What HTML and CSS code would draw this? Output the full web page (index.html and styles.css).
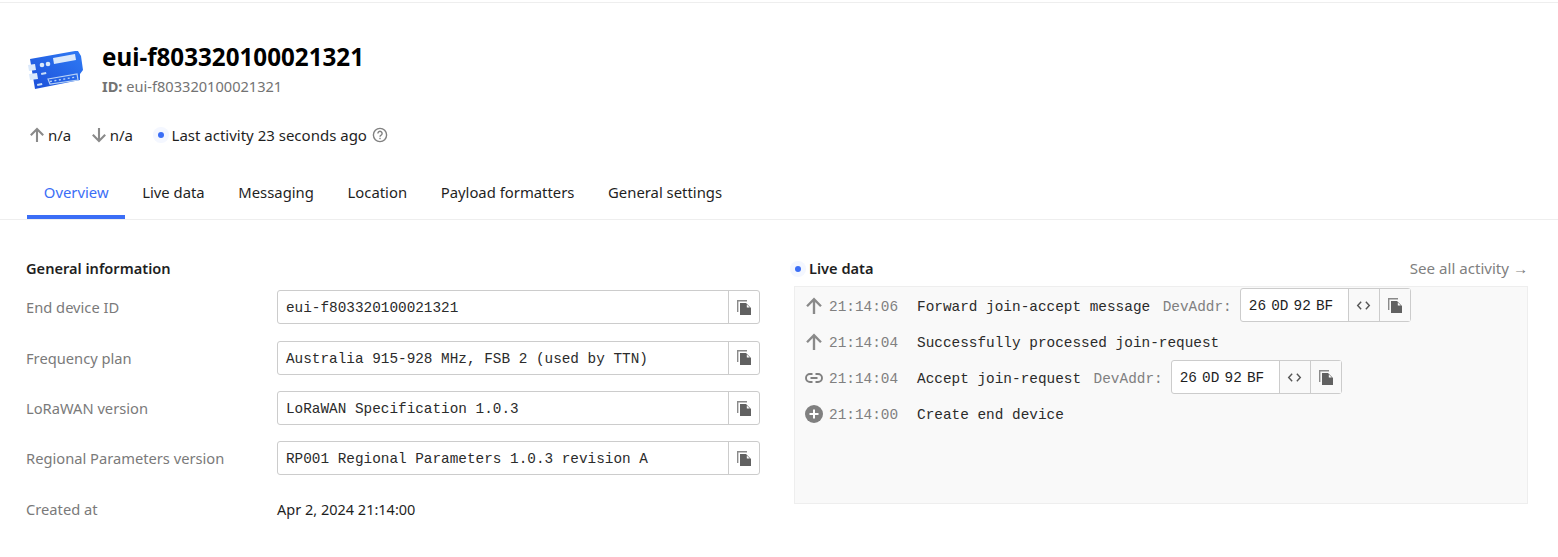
FILE: index.html
```html
<!DOCTYPE html>
<html lang="en">
<head>
  <meta charset="UTF-8">
  <title>eui-f803320100021321</title>
  <link rel="stylesheet" href="styles.css">
</head>
<body>
  <svg class="defs" width="0" height="0">
    <defs>
      <symbol id="copy" viewBox="0 0 14 15">
        <path d="M0 0h10v1.4H1.4V12H0z" fill="#8a8a8a"/>
        <path d="M3 3h6l5 5v7H3z" fill="#616161"/>
        <path d="M9.800 4.400l3 3h-3z" fill="#fff"/>
      </symbol>
      <symbol id="code" viewBox="0 0 16 16">
        <path d="M5.500 4L1.800 8l3.700 4M10.500 4l3.700 4-3.700 4" fill="none" stroke="#555" stroke-width="1.500"/>
      </symbol>
      <symbol id="up" viewBox="0 0 16 16">
        <path d="M8 15V2M1.800 8.200L8 2l6.200 6.200" fill="none" stroke="#8a8a8a" stroke-width="2.100"/>
      </symbol>
    </defs>
  </svg>

  <header class="device-header">
    <div class="title-row">
      <svg class="device-icon" viewBox="0 0 58 44">
        <defs>
          <linearGradient id="board" x1="0" y1="1" x2="1" y2="0">
            <stop offset="0" stop-color="#1c4fd8"/>
            <stop offset="1" stop-color="#2f7bf5"/>
          </linearGradient>
        </defs>
        <path d="M3 12L48 4l3 0 3 5 2 14-3 4v6L8 42z" fill="url(#board)"/>
        <path d="M1 18l7-1 1 6-7 1zM2 27l8-1 1 6-8 1z" fill="#dbe9fb"/>
        <path d="M26 11l22-4 1 6-22 4z" fill="#dbe9fb"/>
        <circle cx="15" cy="18" r="2.300" fill="#dbe9fb"/>
        <circle cx="21" cy="17" r="2.300" fill="#dbe9fb"/>
        <path d="M14 26l5-1 .4 2-5 1zM10 37l5-1 .4 2-5 1z" fill="#c9def8"/>
        <path d="M21 32l29-5 1 6-28 4z" fill="none" stroke="#b8d2f6" stroke-width="1.200"/>
        <path d="M23 34.500l26-4.500" fill="none" stroke="#b8d2f6" stroke-width="1.400" stroke-dasharray="2 2.500"/>
      </svg>
      <div>
        <h1 class="device-name">eui-f803320100021321</h1>
        <div class="device-id"><b>ID:</b> eui-f803320100021321</div>
      </div>
    </div>
    <div class="stats">
      <span class="stat"><svg class="stat-arrow"><use href="#up"/></svg>n/a</span>
      <span class="stat"><svg class="stat-arrow down"><use href="#up"/></svg>n/a</span>
      <span class="activity"><i class="dot"></i>Last activity 23 seconds ago
        <svg class="help" viewBox="0 0 16 16">
          <circle cx="8" cy="8" r="6.600" fill="none" stroke="#808080" stroke-width="1.400"/>
          <path d="M5.900 6.400a2.100 2.100 0 1 1 3.200 1.800c-.7.4-1.100.8-1.100 1.600" fill="none" stroke="#808080" stroke-width="1.400"/>
          <rect x="7.300" y="10.800" width="1.400" height="1.400" fill="#808080"/>
        </svg>
      </span>
    </div>
    <nav class="tabs">
      <a class="tab active">Overview</a>
      <a class="tab">Live data</a>
      <a class="tab">Messaging</a>
      <a class="tab">Location</a>
      <a class="tab">Payload formatters</a>
      <a class="tab">General settings</a>
    </nav>
  </header>

  <main class="overview">
    <section class="info">
      <h2 class="section-title">General information</h2>
      <div class="info-row">
        <span class="info-label">End device ID</span>
        <div class="field"><span class="field-value">eui-f803320100021321</span><button class="field-btn"><svg class="btn-icon"><use href="#copy"/></svg></button></div>
      </div>
      <div class="info-row">
        <span class="info-label">Frequency plan</span>
        <div class="field"><span class="field-value">Australia 915-928 MHz, FSB 2 (used by TTN)</span><button class="field-btn"><svg class="btn-icon"><use href="#copy"/></svg></button></div>
      </div>
      <div class="info-row">
        <span class="info-label">LoRaWAN version</span>
        <div class="field"><span class="field-value">LoRaWAN Specification 1.0.3</span><button class="field-btn"><svg class="btn-icon"><use href="#copy"/></svg></button></div>
      </div>
      <div class="info-row">
        <span class="info-label">Regional Parameters version</span>
        <div class="field"><span class="field-value">RP001 Regional Parameters 1.0.3 revision A</span><button class="field-btn"><svg class="btn-icon"><use href="#copy"/></svg></button></div>
      </div>
      <div class="info-row">
        <span class="info-label">Created at</span>
        <span class="info-text">Apr 2, 2024 21:14:00</span>
      </div>
    </section>

    <section class="live">
      <div class="live-head">
        <h2 class="section-title"><i class="dot"></i>Live data</h2>
        <a class="see-all">See all activity →</a>
      </div>
      <div class="events">
        <div class="event">
          <svg class="event-icon"><use href="#up"/></svg>
          <span class="event-time">21:14:06</span>
          <span class="event-name">Forward join-accept message</span>
          <span class="event-key">DevAddr:</span>
          <div class="addr"><span class="addr-value">26 0D 92 BF</span><button class="addr-btn"><svg class="code-icon"><use href="#code"/></svg></button><button class="addr-btn"><svg class="btn-icon"><use href="#copy"/></svg></button></div>
        </div>
        <div class="event">
          <svg class="event-icon"><use href="#up"/></svg>
          <span class="event-time">21:14:04</span>
          <span class="event-name">Successfully processed join-request</span>
        </div>
        <div class="event">
          <svg class="event-icon" viewBox="0 0 18 18">
            <path d="M7.500 5H5a4 4 0 0 0 0 8h2.500M10.500 5H13a4 4 0 0 1 0 8h-2.500M5.500 9h7" fill="none" stroke="#808080" stroke-width="1.900"/>
          </svg>
          <span class="event-time">21:14:04</span>
          <span class="event-name">Accept join-request</span>
          <span class="event-key">DevAddr:</span>
          <div class="addr"><span class="addr-value">26 0D 92 BF</span><button class="addr-btn"><svg class="code-icon"><use href="#code"/></svg></button><button class="addr-btn"><svg class="btn-icon"><use href="#copy"/></svg></button></div>
        </div>
        <div class="event">
          <svg class="event-icon" viewBox="0 0 18 18">
            <circle cx="9" cy="9" r="9" fill="#808080"/>
            <path d="M9 4.500v9M4.500 9h9" stroke="#fff" stroke-width="2"/>
          </svg>
          <span class="event-time">21:14:00</span>
          <span class="event-name">Create end device</span>
        </div>
      </div>
    </section>
  </main>
</body>
</html>
```

FILE: styles.css
```css
* {
  box-sizing: border-box;
}

html, body {
  height: 557px;
  overflow: hidden;
}

body {
  margin: 0;
  font-family: "Noto Sans", "Open Sans", sans-serif;
  font-size: 14.7px;
  color: #1f1f1f;
  background: #fff;
}

.defs {
  display: block;
}

.device-header {
  margin-top: 2px;
  border-top: 1px solid #eeeeee;
  border-bottom: 1px solid #eeeeee;
  padding-top: 39px;
}

.title-row {
  display: flex;
  align-items: center;
  gap: 17px;
  padding-left: 27px;
}

.device-icon {
  width: 58px;
  height: 44px;
}

.device-name {
  margin: 0;
  font-size: 24.2px;
  line-height: 30px;
  font-weight: 700;
  color: #000;
}

.device-id {
  font-size: 14.6px;
  line-height: 20px;
  margin-top: 4px;
  color: #737373;
}

.stats {
  display: flex;
  align-items: center;
  padding: 20px 0 0 29px;
  height: 58px;
  font-size: 15px;
}

.stat {
  display: flex;
  align-items: center;
  gap: 3px;
  margin-right: 19.5px;
}

.stat-arrow {
  width: 16px;
  height: 16px;
}

.down {
  transform: rotate(180deg);
}

.activity {
  display: flex;
  align-items: center;
  gap: 5px;
  margin-left: 5px;
}

.dot {
  display: inline-block;
  width: 6px;
  height: 6px;
  margin-right: 3px;
  border-radius: 50%;
  background: #3b6ef6;
  box-shadow: 0 0 0 5px #f4f7ff;
}

.help {
  width: 16px;
  height: 16px;
}

.tabs {
  display: flex;
  margin-top: 26px;
  padding-left: 27px;
}

.tab {
  padding: 0 16.8px 11px;
  line-height: 24px;
  font-size: 14.85px;
  border-bottom: 4px solid transparent;
}

.tab.active {
  color: #3b6ef6;
  border-bottom-color: #3b6ef6;
}

.overview {
  display: grid;
  grid-template-columns: 734px 734px;
  gap: 34px;
  padding: 38px 0 0 26px;
}

.section-title {
  margin: 0;
  font-size: 14.6px;
  line-height: 20px;
  font-weight: 600;
  color: #1f1f1f;
}

.info-row {
  display: flex;
  align-items: center;
  height: 50.33px;
}

.section-title + .info-row {
  margin-top: 4.3px;
}

.info-label {
  width: 251px;
  color: #7a7a7a;
}

.info-text {
  font-size: 14.5px;
  color: #1f1f1f;
}

.field {
  display: flex;
  flex: 1;
  height: 34px;
  background: #fff;
  border: 1px solid #cccccc;
  border-radius: 3px;
}

.field-value {
  flex: 1;
  padding-left: 8px;
  font-family: "Liberation Mono", monospace;
  font-size: 14.37px;
  line-height: 35px;
  color: #2b2b2b;
}

.field-btn {
  width: 31px;
  padding: 0;
  background: none;
  border: 0;
  border-left: 1px solid #cccccc;
  display: flex;
  align-items: center;
  justify-content: center;
}

.btn-icon {
  width: 14px;
  height: 15px;
}

.live-head {
  display: flex;
  justify-content: space-between;
  align-items: center;
  height: 20px;
}

.live-head .dot {
  margin-left: 1px;
  margin-right: 8px;
  vertical-align: 2px;
}

.see-all {
  color: #808080;
  font-size: 15.1px;
}

.events {
  height: 218px;
  margin-top: 8px;
  padding-top: 1px;
  background: #f9f9f9;
  border: 1px solid #eeeeee;
}

.event {
  display: flex;
  align-items: center;
  height: 36px;
  padding-left: 10px;
  font-family: "Liberation Mono", monospace;
  font-size: 14.4px;
}

.event-icon {
  width: 18px;
  height: 18px;
  flex: none;
  margin: 0 6px 1px 0;
}

.event-time {
  width: 88px;
  padding-top: 2px;
  color: #808080;
}

.event-name {
  padding-top: 2px;
  color: #2b2b2b;
}

.event-key {
  padding-top: 2px;
  margin-left: 12.5px;
  margin-right: 8px;
  color: #808080;
}

.addr {
  display: flex;
  height: 34px;
  margin-bottom: 2px;
  background: #fff;
  border: 1px solid #cccccc;
  border-radius: 3px;
}

.addr-value {
  width: 107px;
  padding-left: 8px;
  line-height: 34px;
  word-spacing: -3.5px;
}

.addr-btn {
  width: 31px;
  padding: 0;
  background: #f9f9f9;
  border: 0;
  border-left: 1px solid #cccccc;
  display: flex;
  align-items: center;
  justify-content: center;
}

.code-icon {
  width: 15px;
  height: 15px;
}
```
